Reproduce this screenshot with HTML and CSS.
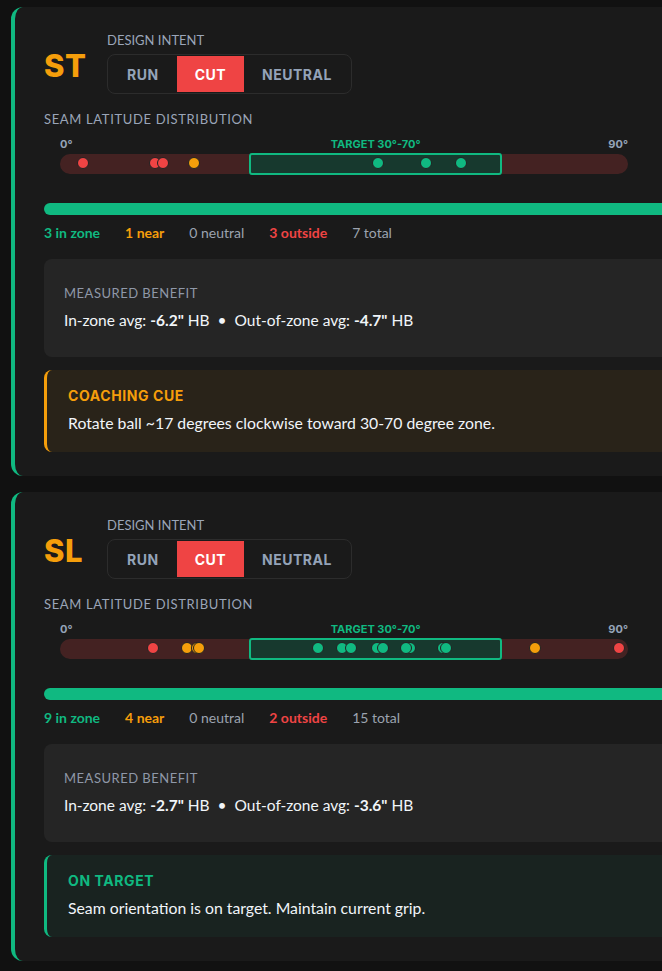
FILE: index.html
```html
<!DOCTYPE html>
<html lang="en">
<head>
    <meta charset="UTF-8">
    <meta name="viewport" content="width=device-width, initial-scale=1.0">
    <title>Seam Latitude</title>
    <link rel="stylesheet" href="styles.css">
</head>
<body>
<div class="page">

    <section class="card">
        <div class="card-header">
            <div class="pitch">ST</div>
            <div class="intent">
                <div class="intent-label">Design Intent</div>
                <div class="segmented">
                    <button class="seg">RUN</button>
                    <button class="seg active">CUT</button>
                    <button class="seg">NEUTRAL</button>
                </div>
            </div>
        </div>

        <div class="section-label">Seam Latitude Distribution</div>
        <div class="dist">
            <div class="scale">
                <span class="scale-min">0°</span>
                <span class="scale-target">TARGET 30°-70°</span>
                <span class="scale-max">90°</span>
            </div>
            <div class="track">
                <div class="zone zone-low"></div>
                <div class="zone zone-target"></div>
                <div class="zone zone-high"></div>
                <span class="dot outside" style="left: 4.05%"></span>
                <span class="dot outside" style="left: 16.7%"></span>
                <span class="dot outside" style="left: 18.1%"></span>
                <span class="dot near" style="left: 23.6%"></span>
                <span class="dot in" style="left: 56.0%"></span>
                <span class="dot in" style="left: 64.4%"></span>
                <span class="dot in" style="left: 70.6%"></span>
            </div>
        </div>

        <div class="bar"><div class="bar-fill"></div></div>

        <div class="stats">
            <span class="stat in">3 in zone</span>
            <span class="stat near">1 near</span>
            <span class="stat">0 neutral</span>
            <span class="stat out">3 outside</span>
            <span class="stat">7 total</span>
        </div>

        <div class="benefit">
            <div class="benefit-label">Measured Benefit</div>
            <div class="benefit-text">In-zone avg: <b>-6.2"</b> HB <span class="sep">•</span> Out-of-zone avg: <b>-4.7"</b> HB</div>
        </div>

        <div class="cue cue-warn">
            <div class="cue-title">Coaching Cue</div>
            <div class="cue-text">Rotate ball ~17 degrees clockwise toward 30-70 degree zone.</div>
        </div>
    </section>

    <section class="card">
        <div class="card-header">
            <div class="pitch">SL</div>
            <div class="intent">
                <div class="intent-label">Design Intent</div>
                <div class="segmented">
                    <button class="seg">RUN</button>
                    <button class="seg active">CUT</button>
                    <button class="seg">NEUTRAL</button>
                </div>
            </div>
        </div>

        <div class="section-label">Seam Latitude Distribution</div>
        <div class="dist">
            <div class="scale">
                <span class="scale-min">0°</span>
                <span class="scale-target">TARGET 30°-70°</span>
                <span class="scale-max">90°</span>
            </div>
            <div class="track">
                <div class="zone zone-low"></div>
                <div class="zone zone-target"></div>
                <div class="zone zone-high"></div>
                <span class="dot outside" style="left: 16.4%"></span>
                <span class="dot near" style="left: 22.3%"></span>
                <span class="dot near" style="left: 24.1%"></span>
                <span class="dot near" style="left: 24.5%"></span>
                <span class="dot in" style="left: 45.4%"></span>
                <span class="dot in" style="left: 49.6%"></span>
                <span class="dot in" style="left: 51.2%"></span>
                <span class="dot in" style="left: 55.8%"></span>
                <span class="dot in" style="left: 56.9%"></span>
                <span class="dot in" style="left: 61.6%"></span>
                <span class="dot in" style="left: 61.0%"></span>
                <span class="dot in" style="left: 67.4%"></span>
                <span class="dot in" style="left: 68.0%"></span>
                <span class="dot near" style="left: 83.6%"></span>
                <span class="dot outside" style="left: 98.5%"></span>
            </div>
        </div>

        <div class="bar"><div class="bar-fill"></div></div>

        <div class="stats">
            <span class="stat in">9 in zone</span>
            <span class="stat near">4 near</span>
            <span class="stat">0 neutral</span>
            <span class="stat out">2 outside</span>
            <span class="stat">15 total</span>
        </div>

        <div class="benefit">
            <div class="benefit-label">Measured Benefit</div>
            <div class="benefit-text">In-zone avg: <b>-2.7"</b> HB <span class="sep">•</span> Out-of-zone avg: <b>-3.6"</b> HB</div>
        </div>

        <div class="cue cue-ok">
            <div class="cue-title">On Target</div>
            <div class="cue-text">Seam orientation is on target. Maintain current grip.</div>
        </div>
    </section>

</div>
</body>
</html>
```

FILE: styles.css
```css
html, body {
    margin: 0;
    background-color: #111111;
    overflow: hidden;
}
body {
    font-family: Lato, "Liberation Sans", sans-serif;
    color: #f1f5f9;
}
.page {
    padding: 7px 0 0 11px;
}
.card {
    width: 720px;
    box-sizing: border-box;
    background-color: #1a1a1a;
    border-left: 4px solid #10b981;
    border-radius: 12px;
    padding: 26px 29px 24px 29px;
    margin-bottom: 16px;
}
.card-header {
    display: flex;
    align-items: center;
    gap: 21px;
    margin-bottom: 17px;
}
.pitch {
    width: 42px;
    font-family: Inter, "DejaVu Sans", sans-serif;
    font-weight: 800;
    font-size: 31px;
    color: #f59e0b;
    letter-spacing: 0.5px;
    margin-top: 4px;
}
.intent-label {
    font-size: 13px;
    line-height: 14px;
    text-transform: uppercase;
    color: #9aa5b8;
    margin-bottom: 7px;
}
.segmented {
    display: inline-flex;
    border: 1px solid #2c2c2c;
    border-radius: 8px;
    padding: 1px;
}
.seg {
    font-family: Inter, "DejaVu Sans", sans-serif;
    font-weight: 700;
    font-size: 14px;
    letter-spacing: 0.5px;
    color: #94a3b8;
    background: none;
    border: none;
    height: 36px;
    padding: 0 18px;
}
.seg.active {
    background-color: #ef4444;
    color: #ffffff;
}
.section-label {
    font-size: 13px;
    line-height: 16px;
    text-transform: uppercase;
    letter-spacing: 0.65px;
    color: #9aa5b8;
    margin-bottom: 11px;
}
.dist {
    width: 568px;
    margin-left: 16px;
}
.scale, .track {
    display: grid;
    grid-template-columns: 3fr 4fr 2fr;
}
.scale {
    font-family: Inter, "DejaVu Sans", sans-serif;
    font-weight: 700;
    font-size: 11px;
    line-height: 12px;
    color: #94a3b8;
    margin-bottom: 3px;
}
.scale-target {
    text-align: center;
    color: #10b981;
}
.scale-max {
    text-align: right;
}
.track {
    position: relative;
    height: 20px;
    align-items: center;
}
.zone {
    height: 20px;
    background-color: rgba(239, 68, 68, 0.2);
}
.zone-low {
    border-radius: 10px 0 0 10px;
}
.zone-high {
    border-radius: 0 10px 10px 0;
}
.zone-target {
    height: 22px;
    box-sizing: border-box;
    border: 2px solid #10b981;
    border-radius: 3px;
    background-color: rgba(16, 185, 129, 0.2);
}
.dot {
    position: absolute;
    top: 50%;
    width: 12px;
    height: 12px;
    box-sizing: border-box;
    border-radius: 50%;
    border: 1.5px solid #222222;
    transform: translate(-50%, -50%);
}
.dot.in { background-color: #10b981; }
.dot.near { background-color: #f59e0b; }
.dot.outside { background-color: #ef4444; }
.bar {
    margin-top: 30px;
    height: 12px;
    border-radius: 6px;
    overflow: hidden;
    background-color: #2a2a2a;
}
.bar-fill {
    height: 100%;
    width: 100%;
    background-color: #10b981;
}
.stats {
    display: flex;
    gap: 25px;
    margin-top: 9px;
    font-size: 14px;
    line-height: 18px;
    color: #9ca3af;
}
.stat.in { color: #10b981; font-weight: 700; }
.stat.near { color: #f59e0b; font-weight: 700; }
.stat.out { color: #ef4444; font-weight: 700; }
.benefit {
    margin-top: 17px;
    background-color: #252525;
    border-radius: 8px;
    padding: 26px 20px;
}
.benefit-label {
    font-size: 13px;
    line-height: 16px;
    text-transform: uppercase;
    letter-spacing: 0.5px;
    color: #8f98a8;
    margin-bottom: 8px;
}
.benefit-text {
    font-size: 15.5px;
    line-height: 22px;
}
.benefit-text .sep {
    margin: 0 4px;
}
.cue {
    margin-top: 13px;
    border-left: 3px solid;
    border-radius: 8px;
    padding: 18px 20px 18px 21px;
}
.cue-warn {
    border-color: #f59e0b;
    background-color: rgba(245, 158, 11, 0.07);
}
.cue-ok {
    border-color: #10b981;
    background-color: rgba(16, 185, 129, 0.06);
}
.cue-title {
    font-family: Inter, "DejaVu Sans", sans-serif;
    font-weight: 700;
    font-size: 14px;
    line-height: 16px;
    text-transform: uppercase;
    letter-spacing: 0.6px;
    margin-bottom: 8px;
}
.cue-warn .cue-title { color: #f59e0b; }
.cue-ok .cue-title { color: #10b981; }
.cue-text {
    font-size: 15.8px;
    line-height: 22px;
}
```
